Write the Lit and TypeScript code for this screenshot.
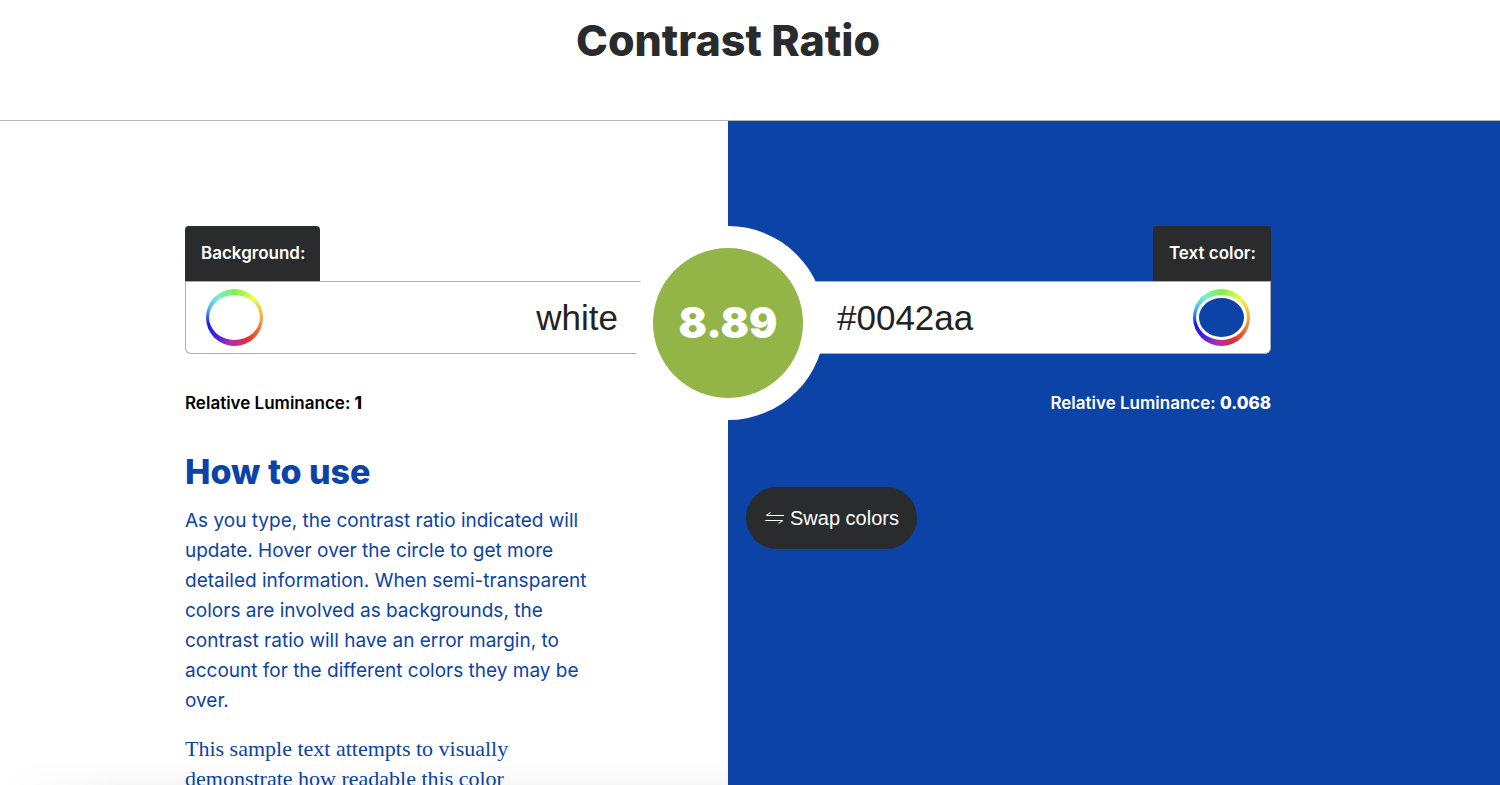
import { LitElement, html, css } from "lit";
import { customElement, property, state } from "lit/decorators.js";

@customElement("ratio-badge")
class RatioBadge extends LitElement {
  @property() value = "";

  static styles = css`
    :host {
      display: block;
    }
    .ring {
      padding: 22px;
      border-radius: 50%;
      background: #fff;
    }
    .disc {
      display: grid;
      place-items: center;
      width: 150px;
      height: 150px;
      border-radius: 50%;
      background: #93b548;
      color: #fff;
      font: 900 42px/1 Inter, sans-serif;
    }
  `;

  render() {
    return html`<div class="ring"><output class="disc">${this.value}</output></div>`;
  }
}

@customElement("color-field")
class ColorField extends LitElement {
  @property() label = "";
  @property() value = "";
  @property() swatch = "";
  @property() luminance = "";
  @property({ type: Boolean, reflect: true }) mirrored = false;

  static styles = css`
    :host {
      display: flex;
      flex-direction: column;
      align-items: flex-start;
      color: #000;
    }
    :host([mirrored]) {
      align-items: flex-end;
      color: #fff;
    }
    .tab {
      padding: 0 15px 0 16px;
      border-radius: 4px 4px 0 0;
      background: #2a2b2d;
      color: #fff;
      font-size: 17px;
      font-weight: 600;
      line-height: 55px;
    }
    .box {
      display: flex;
      align-items: center;
      align-self: stretch;
      box-sizing: border-box;
      height: 73px;
      padding-left: 20px;
      border: 1px solid #a9acb0;
      border-right: 0;
      border-radius: 0 0 0 6px;
      background: #fff;
    }
    :host([mirrored]) .box {
      flex-direction: row-reverse;
      padding: 0 20px 0 0;
      border-right: 1px solid #a9acb0;
      border-left: 0;
      border-radius: 0 0 6px 0;
    }
    .text {
      flex: 1;
      width: 0;
      min-width: 0;
      box-sizing: border-box;
      padding: 0 110px 0 0;
      border: 0;
      outline: 0;
      background: none;
      color: #222;
      font: 35px/70px "Liberation Sans", Arial, sans-serif;
      text-align: right;
    }
    :host([mirrored]) .text {
      padding: 0 0 0 109px;
      text-align: left;
    }
    .wheel {
      appearance: none;
      box-sizing: border-box;
      width: 57px;
      height: 57px;
      padding: 6px 3px;
      border: 0;
      border-radius: 50%;
      background: conic-gradient(
        #7cf24c,
        #eefc50 45deg,
        #f0a040 95deg,
        #e03030 150deg,
        #b02cb0 190deg,
        #5020e0 220deg,
        #1418e8 255deg,
        #50b8f0 290deg,
        #74f0d0 320deg,
        #7cf24c
      );
    }
    .wheel::-webkit-color-swatch-wrapper {
      padding: 0;
    }
    .wheel::-webkit-color-swatch {
      border: 3px solid #fff;
      border-radius: 50%;
    }
    .luminance {
      margin: 37px 0 0;
      font-size: 17px;
      font-weight: 600;
      line-height: 24px;
    }
    .luminance b {
      font-weight: 800;
    }
  `;

  render() {
    return html`
      <label class="tab" for="text">${this.label}</label>
      <div class="box">
        <input class="wheel" type="color" aria-label="${this.label} picker" .value=${this.swatch} />
        <input class="text" id="text" type="text" .value=${this.value} />
      </div>
      <p class="luminance">Relative Luminance: <b>${this.luminance}</b></p>
    `;
  }
}

@customElement("app-root")
class AppRoot extends LitElement {
  @state() private ratio = "8.89";

  static styles = css`
    :host {
      display: flex;
      flex-direction: column;
      height: 100vh;
      overflow: hidden;
      background: #fff;
      font-family: Inter, sans-serif;
      --gutter: 44px;
    }
    .header {
      flex: none;
      padding: 10px var(--gutter) 50px 0;
      border-bottom: 1px solid #b4b4b4;
      text-align: center;
    }
    .title {
      margin: 0;
      color: #2a2b2d;
      font-size: 43px;
      font-weight: 800;
      line-height: 60px;
    }
    .main {
      position: relative;
      flex: 1;
      display: grid;
      grid-template-columns: calc(50% - var(--gutter) / 2) minmax(0, 1fr);
    }
    .side {
      padding-top: 105px;
    }
    .background {
      padding-left: 185px;
    }
    .foreground {
      padding-right: 229px;
      background: #0b43a6;
    }
    .badge {
      position: absolute;
      top: 105px;
      left: calc(50% - var(--gutter) / 2);
      transform: translateX(-50%);
    }
    .guide {
      max-width: 410px;
      color: #0b43a6;
      font-size: 19px;
      line-height: 30px;
    }
    .heading {
      margin: 32px 0 9px;
      font-size: 34px;
      font-weight: 800;
      line-height: 50px;
    }
    .para {
      margin: 0 0 18px;
    }
    .serif {
      font-family: "Liberation Serif", serif;
      font-size: 22px;
    }
    .swap {
      display: flex;
      align-items: center;
      gap: 6px;
      height: 62px;
      margin: 72px 0 0 18px;
      padding: 0 18px 0 19px;
      border: 0;
      border-radius: 31px;
      background: #2a2b2d;
      color: #fff;
      font: 20px "Liberation Sans", Arial, sans-serif;
    }
    .arrows {
      width: 19px;
      height: 14px;
    }
    .fade {
      position: fixed;
      bottom: 0;
      left: 0;
      width: calc(50% - var(--gutter) / 2);
      height: 24px;
      background: linear-gradient(to right, #fff, transparent 120px),
        linear-gradient(to top, #f7f7f7, #fff);
      mix-blend-mode: multiply;
      pointer-events: none;
    }
  `;

  render() {
    return html`
      <header class="header"><h1 class="title">Contrast Ratio</h1></header>
      <main class="main">
        <section class="side background">
          <color-field label="Background:" value="white" swatch="#ffffff" luminance="1"></color-field>
          <div class="guide">
            <h2 class="heading">How to use</h2>
            <p class="para">
              As you type, the contrast ratio indicated will update. Hover over the circle to get
              more detailed information. When semi-transparent colors are involved as backgrounds,
              the contrast ratio will have an error margin, to account for the different colors they
              may be over.
            </p>
            <p class="para serif">
              This sample text attempts to visually demonstrate how readable this color
            </p>
          </div>
        </section>
        <section class="side foreground">
          <color-field mirrored label="Text color:" value="#0042aa" swatch="#0b43a6" luminance="0.068"></color-field>
          <button class="swap" type="button">
            <svg class="arrows" viewBox="0 0 19 14" fill="none" stroke="#fff" aria-hidden="true">
              <path d="M19 4.5H1L5.5 1.5M0 9.5H18L13.5 12.5" />
            </svg>
            Swap colors
          </button>
        </section>
        <ratio-badge class="badge" value=${this.ratio}></ratio-badge>
      </main>
      <div class="fade"></div>
    `;
  }
}
